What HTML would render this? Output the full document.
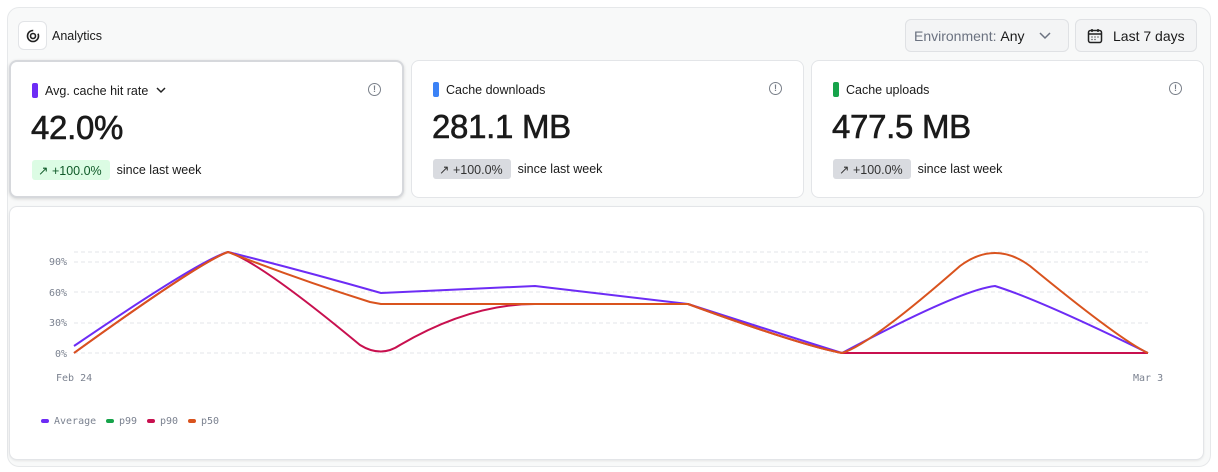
<!DOCTYPE html>
<html><head><meta charset="utf-8"><style>
*{box-sizing:border-box;margin:0;padding:0}
body{width:1218px;height:472px;background:#fff;font-family:"Liberation Sans",sans-serif;color:#1a1a1a;position:relative;overflow:hidden}
.outer{position:absolute;left:7px;top:7px;width:1204px;height:460px;background:#f8f9f9;border:1px solid #e6e8ea;border-radius:12px}
.btn{position:absolute;background:#f3f4f5;border:1px solid #dfe1e4;border-radius:6px;font-size:14px;display:flex;align-items:center}
.card{position:absolute;top:60px;height:138px;background:#fff;border:1px solid #e3e5e8;border-radius:8px}
.card .t{position:absolute;left:21px;top:21px;font-size:12.5px;display:flex;align-items:center}
.card .bar{width:6px;height:15px;border-radius:2px;margin-right:7px}
.card .v{position:absolute;left:20px;top:47px;font-size:33px;-webkit-text-stroke:0.6px #1a1a1a;letter-spacing:-0.3px}
.card .b{position:absolute;left:21px;top:98px;font-size:12.5px;display:flex;align-items:center}
.pill{padding:2px 8px 2px 6px;border-radius:3px;margin-right:7px;height:20px;display:flex;align-items:center}
.info{position:absolute;right:21px;top:21px;width:13px;height:13px;border:1.5px solid #7a808a;border-radius:50%;font-size:9px;color:#7a808a;text-align:center;line-height:10px;font-weight:bold}
.mono{font-family:"DejaVu Sans Mono",monospace;font-size:10px;fill:#7b8290}
</style></head><body>
<div class="outer"></div>
<div class="btn" style="left:18px;top:21px;width:29px;height:29px;background:#fff;justify-content:center;border-color:#e2e4e7">
<svg width="14" height="14" viewBox="0 0 14 14"><circle cx="7" cy="7" r="5.5" fill="none" stroke="#222" stroke-width="1.6" stroke-dasharray="26 6"/><circle cx="7" cy="7" r="2.5" fill="none" stroke="#222" stroke-width="1.6"/></svg></div>
<div style="position:absolute;left:52px;top:29px;font-size:12.5px">Analytics</div>
<div class="btn" style="left:905px;top:19px;width:164px;height:33px;padding-left:8px"><span style="color:#6b7280">Environment:</span>&nbsp;<b style="font-weight:500">Any</b>
<svg style="margin-left:14px" width="12" height="8" viewBox="0 0 12 8"><path d="M1 1l5 5 5-5" fill="none" stroke="#6b7280" stroke-width="1.5"/></svg></div>
<div class="btn" style="left:1075px;top:19px;width:122px;height:33px;padding-left:11px;font-weight:500">
<svg width="16" height="16" viewBox="0 0 16 16" style="margin-right:10px"><rect x="1.5" y="2.5" width="13" height="12" rx="2" fill="none" stroke="#222" stroke-width="1.5"/><path d="M1.5 6h13M5 1v3M11 1v3" stroke="#222" stroke-width="1.5"/><path d="M4.5 9h1M7.5 9h1M10.5 9h1M4.5 11.5h1M7.5 11.5h1" stroke="#222" stroke-width="1.2"/></svg>Last 7 days</div>

<div class="card" style="left:9px;width:395px;border:2px solid #d6d8dc;box-shadow:0 1px 3px rgba(0,0,0,.15)">
<div class="t"><span class="bar" style="background:#6d2cf5"></span>Avg. cache hit rate<svg style="margin-left:8px" width="10" height="7" viewBox="0 0 10 7"><path d="M1 1l4 4 4-4" fill="none" stroke="#222" stroke-width="1.5"/></svg></div>
<div class="info">!</div><div class="v">42.0%</div>
<div class="b"><span class="pill" style="background:#dcfce4;color:#0f5a28">↗ +100.0%</span>since last week</div></div>
<div class="card" style="left:411px;width:393px">
<div class="t"><span class="bar" style="background:#3b82f6"></span>Cache downloads</div>
<div class="info">!</div><div class="v">281.1 MB</div>
<div class="b"><span class="pill" style="background:#d9dbe0;color:#333">↗ +100.0%</span>since last week</div></div>
<div class="card" style="left:811px;width:393px">
<div class="t"><span class="bar" style="background:#16a34a"></span>Cache uploads</div>
<div class="info">!</div><div class="v">477.5 MB</div>
<div class="b"><span class="pill" style="background:#d9dbe0;color:#333">↗ +100.0%</span>since last week</div></div>

<div style="position:absolute;left:9px;top:206px;width:1195px;height:254px;background:#fff;border:1px solid #e3e5e8;border-radius:8px;box-shadow:0 1px 2px rgba(0,0,0,.08)"></div>
<svg style="position:absolute;left:0;top:0" width="1218" height="472">
<g stroke="#e3e5e8" stroke-dasharray="4 3" stroke-width="1">
<line x1="74" y1="252" x2="1148" y2="252"/><line x1="74" y1="262" x2="1148" y2="262"/><line x1="74" y1="292" x2="1148" y2="292"/><line x1="74" y1="323" x2="1148" y2="323"/><line x1="74" y1="353" x2="1148" y2="353"/></g>
<g class="mono" text-anchor="end"><text x="67" y="265">90%</text><text x="67" y="296">60%</text><text x="67" y="326">30%</text><text x="67" y="357">0%</text></g>
<text class="mono" x="56" y="381">Feb 24</text><text class="mono" x="1133" y="381">Mar 3</text>
<g fill="none" stroke-width="2" stroke-linejoin="round">
<path stroke="#6d2cf5" d="M74 346 Q200 260 228 252 Q300 270 381 293 L535 286 L688 304 Q800 340 842 353 Q960 290 995 286 Q1040 300 1148 353"/>
<path stroke="#c8104f" d="M74 353 Q200 262 228 252 Q260 262 360 345 Q381 358 400 345 Q470 304 535 304 L688 304 Q800 345 842 353 L1148 353"/>
<path stroke="#d9531e" d="M74 353 Q200 262 228 252 Q300 280 370 302 L381 304 L688 304 Q800 345 842 353 Q870 345 960 266 Q995 240 1030 266 Q1120 340 1148 353"/>
</g>
<g class="mono"><rect x="41" y="419" width="8" height="4" rx="2" fill="#6d2cf5"/><text x="54" y="424">Average</text>
<rect x="106" y="419" width="8" height="4" rx="2" fill="#16a34a"/><text x="119" y="424">p99</text>
<rect x="147" y="419" width="8" height="4" rx="2" fill="#c8104f"/><text x="160" y="424">p90</text>
<rect x="188" y="419" width="8" height="4" rx="2" fill="#d9531e"/><text x="201" y="424">p50</text></g>
</svg>
</body></html>
